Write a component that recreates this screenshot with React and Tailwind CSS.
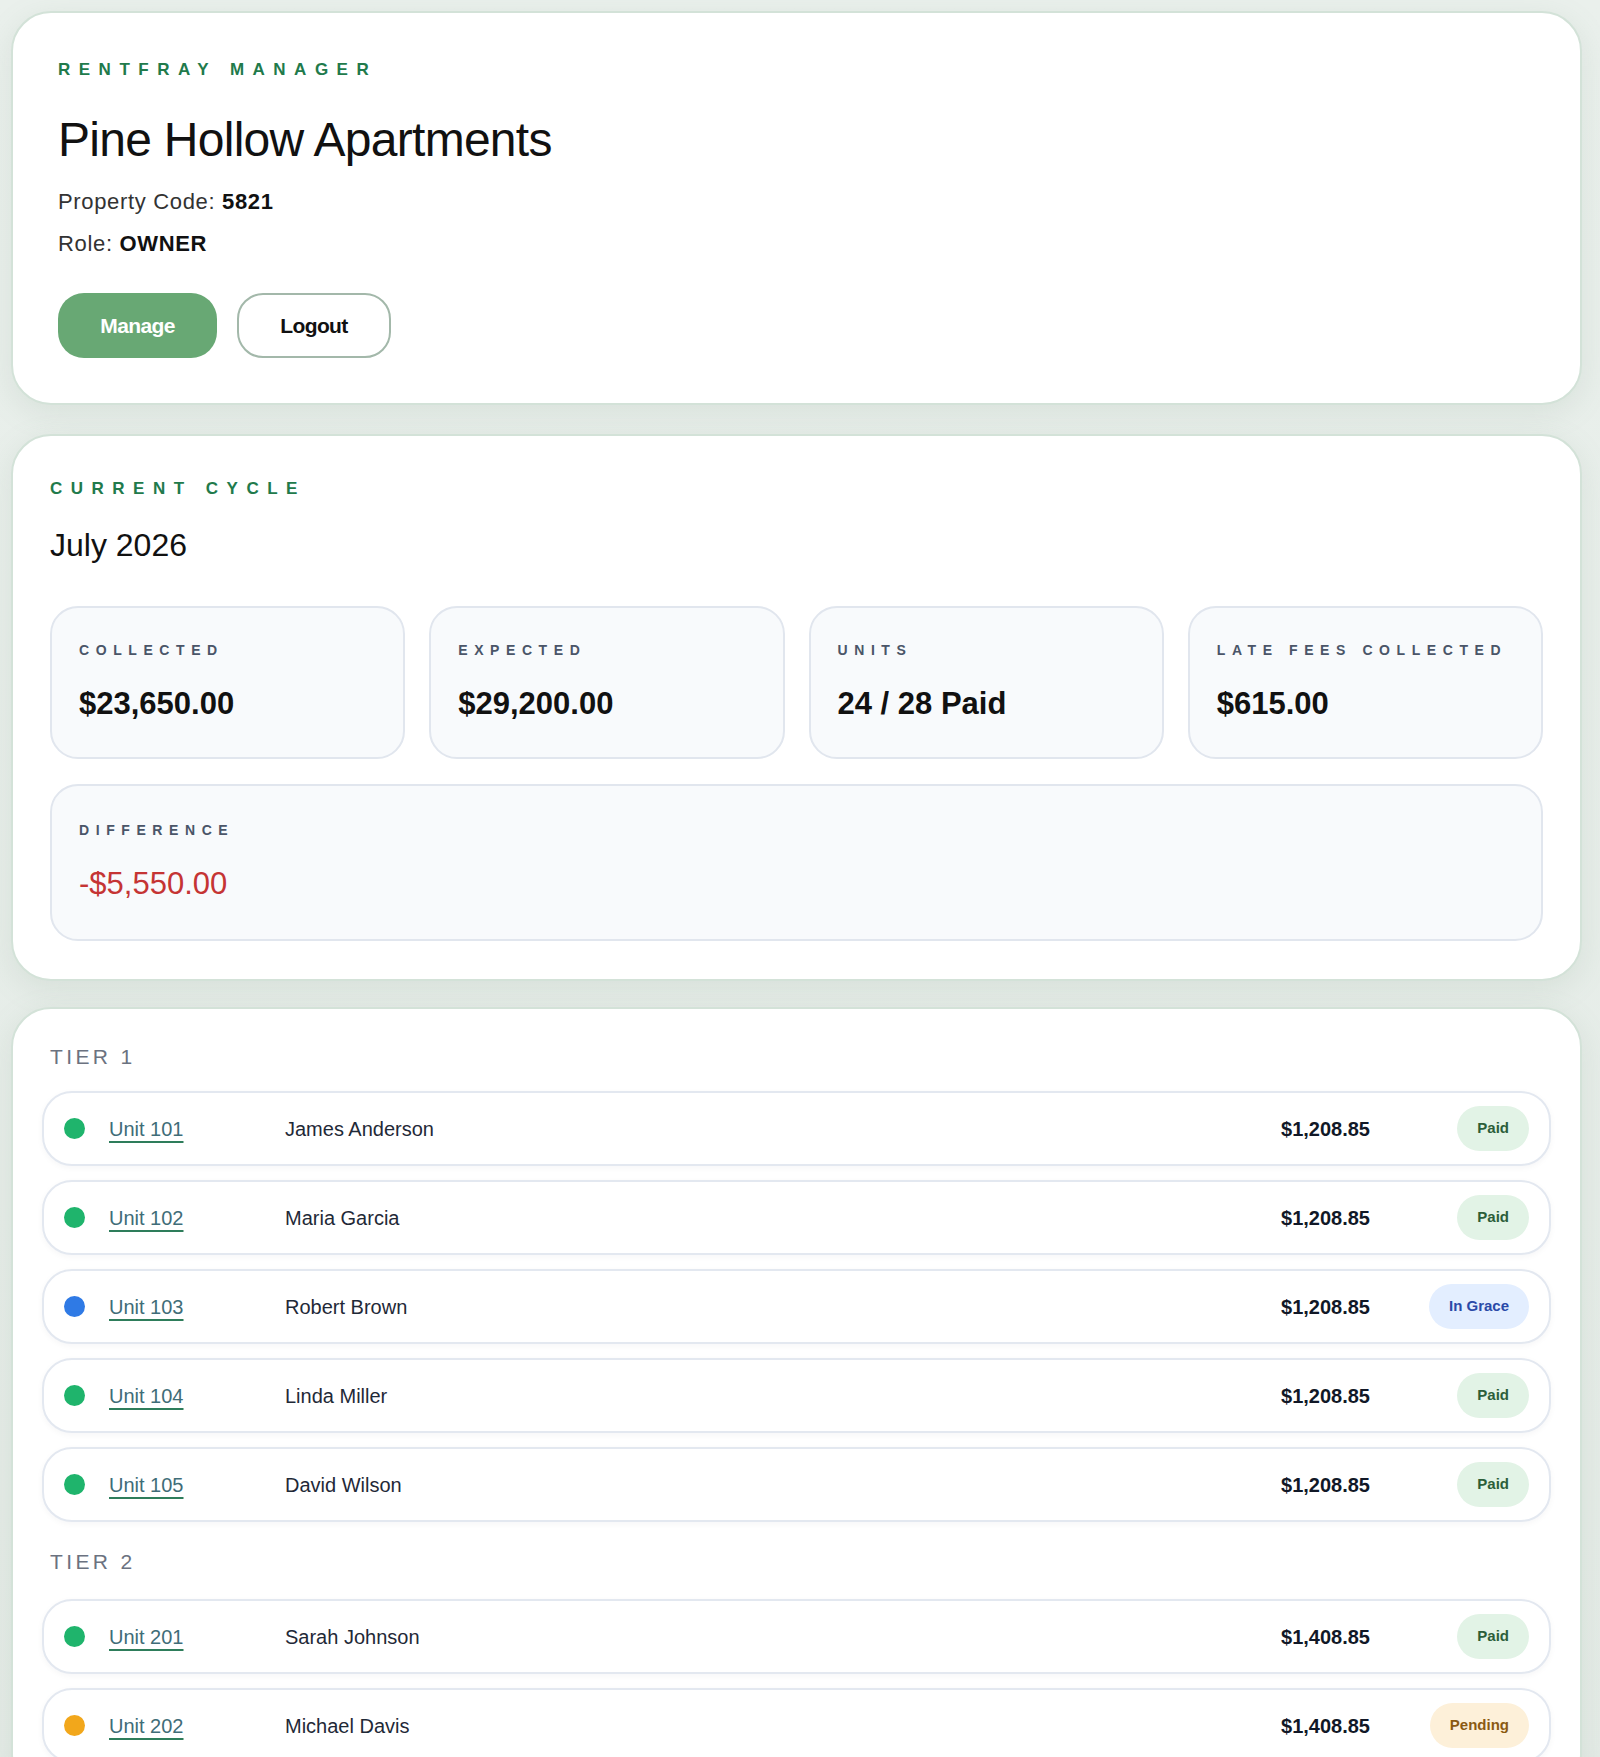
import React from 'react'

const tiers = [
  {
    label: 'TIER 1',
    units: [
      { unit: 'Unit 101', tenant: 'James Anderson', amount: '$1,208.85', status: 'paid' },
      { unit: 'Unit 102', tenant: 'Maria Garcia', amount: '$1,208.85', status: 'paid' },
      { unit: 'Unit 103', tenant: 'Robert Brown', amount: '$1,208.85', status: 'grace' },
      { unit: 'Unit 104', tenant: 'Linda Miller', amount: '$1,208.85', status: 'paid' },
      { unit: 'Unit 105', tenant: 'David Wilson', amount: '$1,208.85', status: 'paid' },
    ],
  },
  {
    label: 'TIER 2',
    units: [
      { unit: 'Unit 201', tenant: 'Sarah Johnson', amount: '$1,408.85', status: 'paid' },
      { unit: 'Unit 202', tenant: 'Michael Davis', amount: '$1,408.85', status: 'pending' },
    ],
  },
]

const statusStyles = {
  paid: { dot: 'bg-[#1fb46c]', badge: 'bg-[#e2f3e6] text-[#2c5e3a]', text: 'Paid' },
  grace: { dot: 'bg-[#2f7ae5]', badge: 'bg-[#e3eeff] text-[#2a4aa8]', text: 'In Grace' },
  pending: { dot: 'bg-[#f2a71b]', badge: 'bg-[#fdf0d9] text-[#8a5a12]', text: 'Pending' },
}

const stats = [
  { label: 'COLLECTED', value: '$23,650.00' },
  { label: 'EXPECTED', value: '$29,200.00' },
  { label: 'UNITS', value: '24 / 28 Paid' },
  { label: 'LATE FEES COLLECTED', value: '$615.00' },
]

function StatTile({ label, value, wide }) {
  return (
    <div
      className={`rounded-[28px] border-2 border-[#e1e6ee] bg-[#f8fafc] px-[27px] ${
        wide ? 'pt-[36px] pb-[35px]' : 'pt-[34px] pb-[33px]'
      }`}
    >
      <p className="text-[14px] font-bold leading-[16px] tracking-[0.47em] text-[#4a5568]">{label}</p>
      <p
        className={`mt-[26px] text-[31px] leading-[40px] ${
          wide ? 'font-medium text-[#c53434]' : 'font-semibold text-[#111111]'
        }`}
      >
        {value}
      </p>
    </div>
  )
}

function UnitRow({ unit, tenant, amount, status }) {
  const s = statusStyles[status]
  return (
    <div className="flex h-[75px] items-center rounded-[30px] border-2 border-[#e3e8f0] bg-white pl-[20px] pr-[20px] shadow-[0_2px_6px_rgba(15,23,42,0.04)]">
      <span className={`h-[21px] w-[21px] shrink-0 rounded-full ${s.dot}`} />
      <div className="ml-[24px] w-[176px] shrink-0">
        <a
          href="#"
          className="text-[20px] text-[#3f6d78] underline decoration-[#2e7d5b] decoration-2 underline-offset-[5px]"
        >
          {unit}
        </a>
      </div>
      <span className="flex-1 text-[20px] text-[#1f2937]">{tenant}</span>
      <span className="text-[20px] font-bold text-[#111827]">{amount}</span>
      <div className="flex w-[159px] shrink-0 justify-end">
        <span className={`flex h-[45px] items-center rounded-full px-5 text-[15px] font-semibold ${s.badge}`}>
          {s.text}
        </span>
      </div>
    </div>
  )
}

export default function App() {
  return (
    <div className="min-h-screen bg-[#e8eeea] bg-[linear-gradient(180deg,#eaf0ec,#e4ebe6)] pt-[11px] pr-[18px] pb-[11px] pl-[11px] font-['Liberation_Sans',Arial,sans-serif]">
      <div className="flex flex-col">
        {/* header card */}
        <section className="rounded-[40px] border-2 border-[#d3e2d8] bg-white pt-[47px] pr-[45px] pb-[45px] pl-[45px] shadow-[0_8px_30px_rgba(120,150,130,0.15)]">
          <p className="text-[17px] font-bold leading-[20px] tracking-[0.5em] text-[#217a4b]">RENTFRAY MANAGER</p>
          <h1 className="mt-[32px] text-[48px] leading-[56px] tracking-[-0.015em] text-[#111111]">
            Pine Hollow Apartments
          </h1>
          <p className="mt-[19px] text-[22px] leading-[30px] tracking-[0.03em] text-[#333333]">
            Property Code: <span className="font-bold text-[#111111]">5821</span>
          </p>
          <p className="mt-[12px] text-[22px] leading-[30px] tracking-[0.03em] text-[#333333]">
            Role: <span className="font-bold text-[#111111]">OWNER</span>
          </p>
          <div className="mt-[34px] flex gap-[20px]">
            <button
              type="button"
              className="h-[65px] w-[159px] rounded-[26px] bg-[#68a874] text-[21px] font-bold tracking-[-0.03em] text-white"
            >
              Manage
            </button>
            <button
              type="button"
              className="h-[65px] w-[154px] rounded-[26px] border-2 border-[#a3b8aa] bg-white text-[21px] font-semibold tracking-[-0.03em] text-[#111111]"
            >
              Logout
            </button>
          </div>
        </section>

        {/* current cycle */}
        <section className="mt-[29px] rounded-[40px] border-2 border-[#d3e2d8] bg-white px-[37px] pt-[43px] pb-[38px] shadow-[0_8px_30px_rgba(120,150,130,0.15)]">
          <p className="text-[17px] font-bold leading-[20px] tracking-[0.5em] text-[#217a4b]">CURRENT CYCLE</p>
          <p className="mt-[26px] text-[32px] leading-[40px] text-[#111111]">July 2026</p>
          <div className="mt-[41px] grid grid-cols-4 gap-6">
            {stats.map((s) => (
              <StatTile key={s.label} label={s.label} value={s.value} />
            ))}
          </div>
          <div className="mt-[25px]">
            <StatTile label="DIFFERENCE" value="-$5,550.00" wide />
          </div>
        </section>

        {/* units */}
        <section className="mt-[26px] rounded-[40px] border-2 border-[#d3e2d8] bg-white px-[29px] pt-[34px] pb-[30px] shadow-[0_8px_30px_rgba(120,150,130,0.15)]">
          {tiers.map((tier, i) => (
            <div key={tier.label} className={i > 0 ? 'mt-[26px]' : ''}>
              <h2 className="pl-[8px] text-[21px] leading-[28px] tracking-[0.16em] text-[#6b7280]">{tier.label}</h2>
              <div className={`flex flex-col gap-[14px] ${i > 0 ? 'mt-[23px]' : 'mt-[20px]'}`}>
                {tier.units.map((u) => (
                  <UnitRow key={u.unit} {...u} />
                ))}
              </div>
            </div>
          ))}
        </section>
      </div>
    </div>
  )
}
